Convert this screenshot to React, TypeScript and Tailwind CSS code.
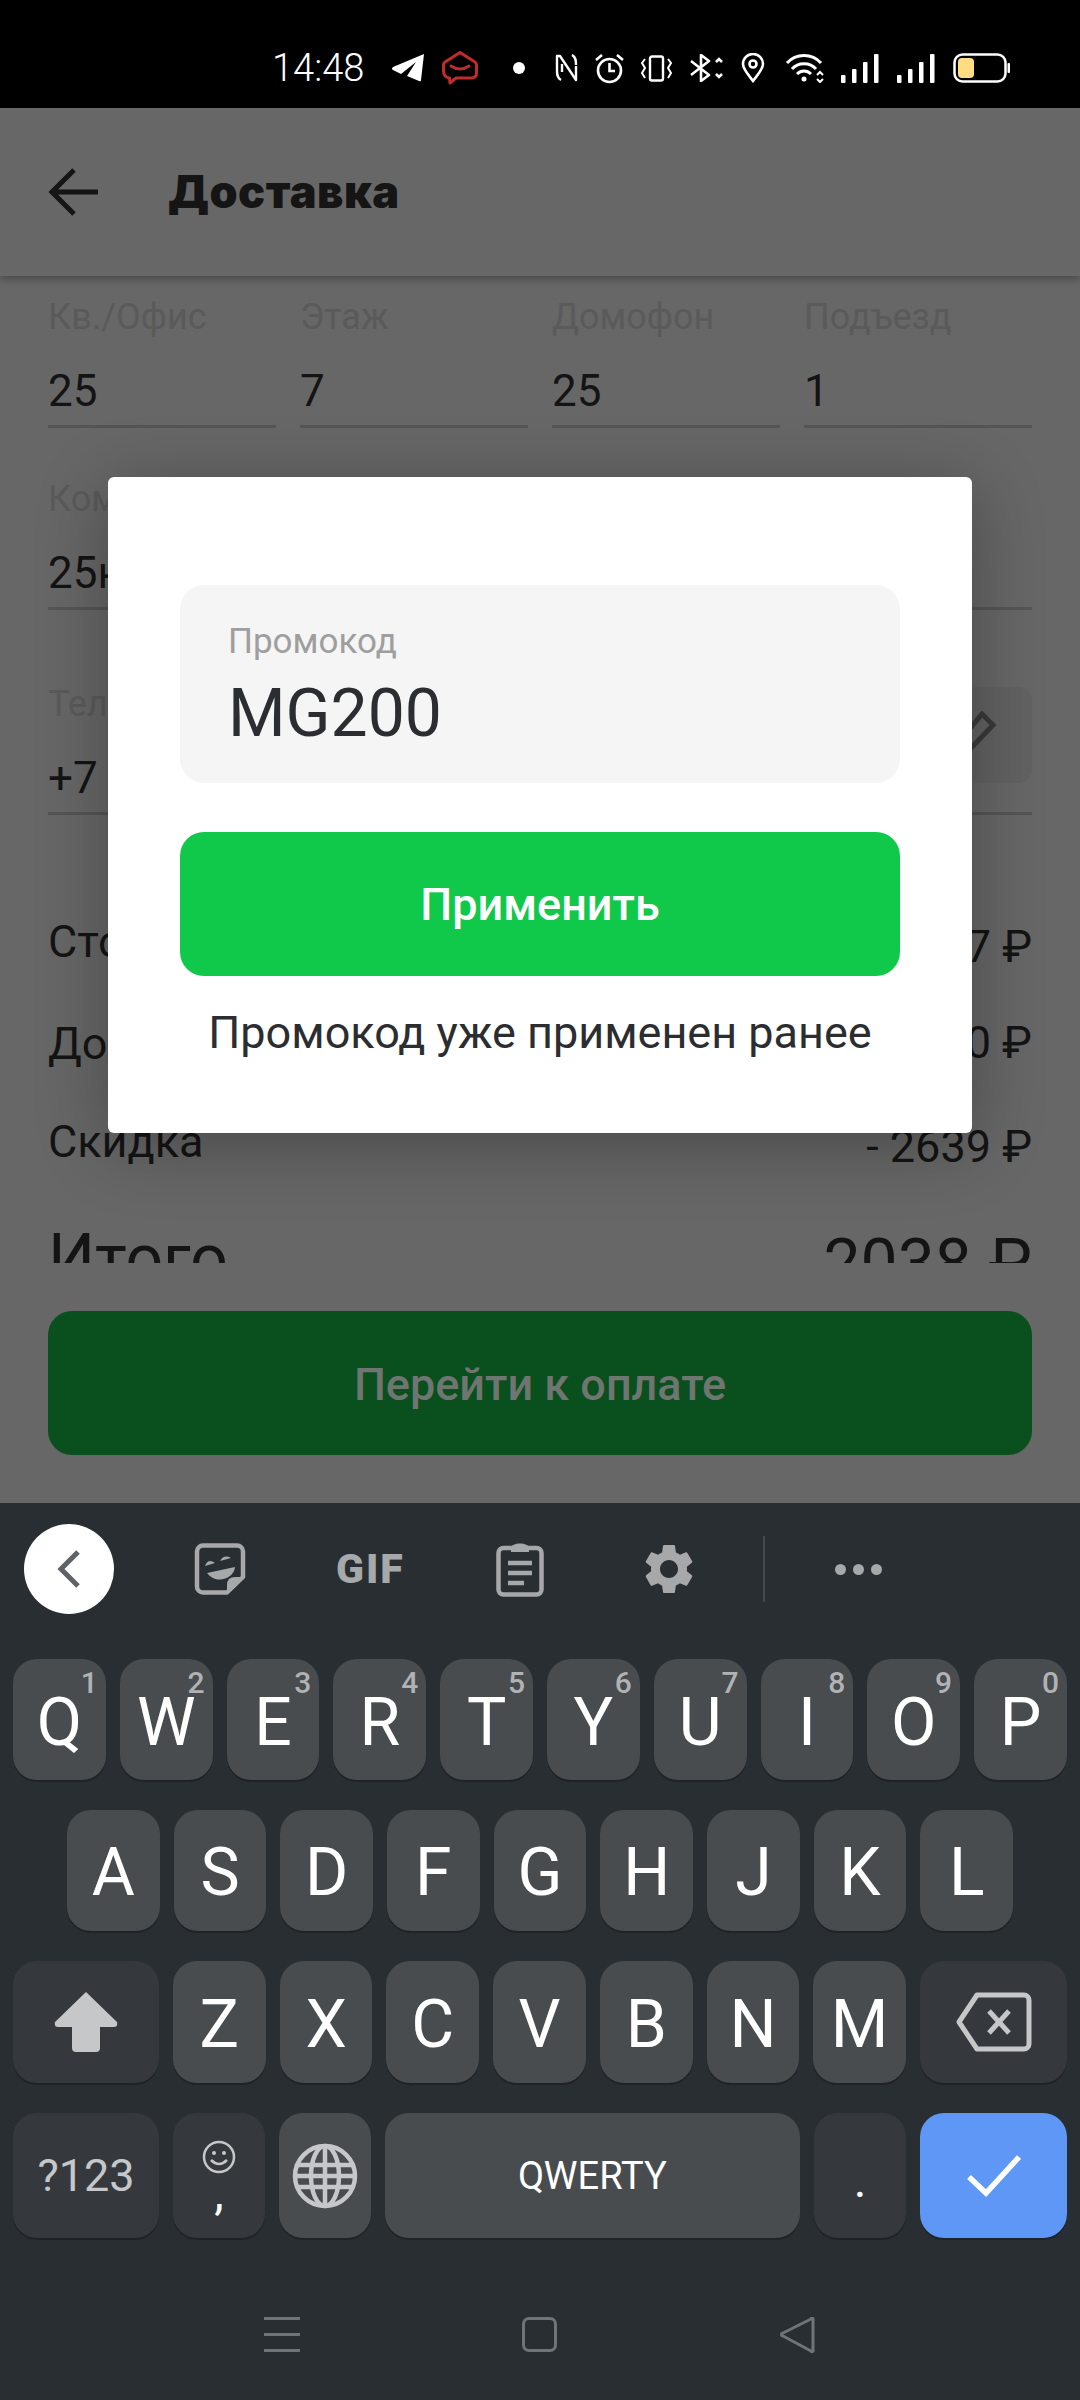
const row1 = [
  ["Q", "1"],
  ["W", "2"],
  ["E", "3"],
  ["R", "4"],
  ["T", "5"],
  ["Y", "6"],
  ["U", "7"],
  ["I", "8"],
  ["O", "9"],
  ["P", "0"],
];
const row2 = ["A", "S", "D", "F", "G", "H", "J", "K", "L"];
const row3 = ["Z", "X", "C", "V", "B", "N", "M"];

function StatusIcons() {
  return (
    <div className="flex items-center h-[108px] pl-[272px] pt-[28px] text-white">
      <span className="w-[91px] text-[38px] leading-[40px] font-['Roboto',sans-serif] font-light">14:48</span>
      <svg className="ml-[29px]" width="32" height="28" viewBox="0 0 32 28" fill="white">
        <path d="M32 0 L1 13 Q-1 15 1 16 L9 20 L24 8 L15 22 L27 27 Q29 28 29 26 Z" />
      </svg>
      <svg className="ml-[18px]" width="36" height="34" viewBox="0 0 36 34" fill="none" stroke="#c02c2c" strokeWidth="3">
        <path d="M18 1.5 L33 11 Q34.5 12 34.5 14 V22 Q34.5 27 29 27 H14 L8 32 L7.5 27 Q1.5 26 1.5 20 V14 Q1.5 12 3 11 Z" strokeLinejoin="round" />
        <path d="M9 15 Q18 21 27 15" strokeLinecap="round" />
      </svg>
      <div className="ml-[35px] w-[12px] h-[12px] rounded-full bg-white" />
      <svg className="ml-[30px]" width="23" height="28" viewBox="0 0 23 28" fill="none" stroke="white" strokeWidth="2.4">
        <path d="M6 26 C2 24 2 20 2 16 V2 H5 L21 26 V12" strokeLinejoin="round" />
        <path d="M17 1 C21 3 21 7 21 11 M7 10 V18" />
      </svg>
      <svg className="ml-[17px]" width="29" height="31" viewBox="0 0 29 31" fill="none" stroke="white" strokeWidth="2.6">
        <circle cx="14.5" cy="17.5" r="11.5" />
        <path d="M14.5 10 V18 H20" />
        <path d="M1 7 L7 2 M28 7 L22 2" />
      </svg>
      <svg className="ml-[16px]" width="33" height="27" viewBox="0 0 33 27" fill="none" stroke="white" strokeWidth="2.4">
        <rect x="10" y="1.5" width="13" height="24" rx="2" />
        <path d="M5 4 L2 8 L5 13 L2 18 L5 23 M28 4 L31 8 L28 13 L31 18 L28 23" strokeWidth="2" />
      </svg>
      <svg className="ml-[17px]" width="34" height="28" viewBox="0 0 34 28" fill="none" stroke="white" strokeWidth="2.6">
        <path d="M1 7 L19 21 L11 27 V1 L19 7 L1 21" strokeLinejoin="round" />
        <path d="M26 8 L29 5 L32 8 M26 20 L29 23 L32 20" />
      </svg>
      <svg className="ml-[17px]" width="24" height="30" viewBox="0 0 24 30" fill="none" stroke="white" strokeWidth="2.6">
        <path d="M12 28 C6 20 2 16 2 11 a10 10 0 0 1 20 0 C22 16 18 20 12 28 Z" />
        <circle cx="12" cy="11" r="3.5" />
      </svg>
      <svg className="ml-[20px]" width="41" height="30" viewBox="0 0 41 30" fill="none" stroke="white" strokeWidth="3">
        <path d="M2 10 C11 0 27 0 36 10" />
        <path d="M7 16 C13 9 25 9 31 16" />
        <path d="M12 21 C16 17 22 17 26 21" />
        <circle cx="19" cy="26" r="2.5" fill="white" stroke="none" />
        <path d="M32 22 L35 19 L38 22 M32 26 L35 29 L38 26" strokeWidth="2" />
      </svg>
      <svg className="ml-[15px]" width="38" height="29" viewBox="0 0 38 29" fill="white">
        <rect x="0" y="21" width="4.5" height="8" rx="1" />
        <rect x="11" y="15" width="4.5" height="14" rx="1" />
        <rect x="22" y="8" width="4.5" height="21" rx="1" />
        <rect x="33" y="0" width="4.5" height="29" rx="1" />
      </svg>
      <svg className="ml-[18px]" width="38" height="29" viewBox="0 0 38 29" fill="white">
        <rect x="0" y="21" width="4.5" height="8" rx="1" />
        <rect x="11" y="15" width="4.5" height="14" rx="1" />
        <rect x="22" y="8" width="4.5" height="21" rx="1" />
        <rect x="33" y="0" width="4.5" height="29" rx="1" />
      </svg>
      <svg className="ml-[18px]" width="57" height="30" viewBox="0 0 57 30" fill="none">
        <rect x="1.5" y="1.5" width="51" height="27" rx="8" stroke="white" strokeWidth="2.5" />
        <rect x="5" y="5" width="16" height="20" rx="4" fill="#ffdd80" />
        <rect x="54.5" y="10" width="2.5" height="10" rx="1" fill="white" />
      </svg>
    </div>
  );
}

function Field({ label, value, className }: { label: string; value: string; className?: string }) {
  return (
    <div className={className}>
      <div className="h-[40px] leading-[40px] text-[36px] text-[#5a5a5a]">{label}</div>
      <div className="mt-[29px] h-[50px] leading-[50px] text-[44px] text-[#141414]">{value}</div>
      <div className="mt-[9px] h-[3px] bg-[#555555]" />
    </div>
  );
}

function SummaryRow({ label, value, offset, className }: { label: string; value: string; offset: string; className: string }) {
  return (
    <div className={`flex justify-between h-[50px] leading-[50px] text-[45px] text-[#141414] ${className}`}>
      <span>{label}</span>
      <span className={offset}>{value}</span>
    </div>
  );
}

function Key({ children, hint, dark, className }: { children?: React.ReactNode; hint?: string; dark?: boolean; className?: string }) {
  return (
    <div
      className={`relative flex items-center justify-center rounded-[24px] shadow-[0_2px_0_#1f2327] text-white font-['Roboto',sans-serif] ${
        dark ? "bg-[#35393d]" : "bg-[#484c4f]"
      } ${className ?? "flex-1"}`}
    >
      {children}
      {hint && (
        <span className="absolute top-[7px] right-[8px] text-[30px] leading-[34px] font-medium text-[#b0b2b4]">{hint}</span>
      )}
    </div>
  );
}

function Toolbar() {
  return (
    <div className="flex items-center h-[156px] pb-[24px] pl-[24px]">
      <div className="flex items-center justify-center w-[90px] h-[90px] rounded-full bg-white">
        <svg width="24" height="38" viewBox="0 0 24 38" fill="none" stroke="#5f6368" strokeWidth="5">
          <path d="M21 2 L4 19 L21 36" />
        </svg>
      </div>
      <svg className="ml-[80px]" width="52" height="52" viewBox="0 0 52 52" fill="none" stroke="#a6a8aa" strokeWidth="4.5">
        <path d="M9 2.5 H43 a6 6 0 0 1 6 6 V34 L33 49.5 H9 a6 6 0 0 1-6-6 V8.5 a6 6 0 0 1 6-6 Z" strokeLinejoin="round" />
        <path d="M33 49.5 L50 34 H41 Q33 34 33 42 Z" fill="#a6a8aa" stroke="none" />
        <path d="M13 30 L41 24 C40 36 22 42 13 30 Z" fill="#a6a8aa" stroke="none" />
        <path d="M11 23 Q14 15 21 20 Z" fill="#a6a8aa" stroke="none" />
        <path d="M26 18 Q30 11 37 15 Z" fill="#a6a8aa" stroke="none" />
      </svg>
      <span className="ml-[90px] w-[71px] text-[41px] leading-[41px] font-black text-[#a6a8aa] font-['Roboto',sans-serif] tracking-[2px]">GIF</span>
      <svg className="ml-[89px]" width="48" height="56" viewBox="0 0 48 56" fill="none" stroke="#a6a8aa" strokeWidth="4.5">
        <rect x="2.5" y="7" width="43" height="46.5" rx="5" />
        <path d="M15 7 C15 1 33 1 33 7 V11 H15 Z" fill="#a6a8aa" stroke="none" />
        <path d="M12 22 H36 M12 32 H36 M12 42 H28" />
      </svg>
      <svg className="ml-[95px]" width="60" height="60" viewBox="0 0 24 24" fill="#a6a8aa">
        <path d="M19.14,12.94c0.04-0.3,0.06-0.61,0.06-0.94c0-0.32-0.02-0.64-0.07-0.94l2.03-1.58c0.18-0.14,0.23-0.41,0.12-0.61 l-1.92-3.32c-0.12-0.22-0.37-0.29-0.59-0.22l-2.39,0.96c-0.5-0.38-1.03-0.7-1.62-0.94L14.4,2.81c-0.04-0.24-0.24-0.41-0.48-0.41 h-3.84c-0.24,0-0.43,0.17-0.47,0.41L9.25,5.35C8.66,5.59,8.12,5.92,7.63,6.29L5.24,5.33c-0.22-0.08-0.47,0-0.59,0.22L2.74,8.87 C2.62,9.08,2.66,9.34,2.86,9.48l2.03,1.58C4.84,11.36,4.8,11.69,4.8,12s0.02,0.64,0.07,0.94l-2.03,1.58 c-0.18,0.14-0.23,0.41-0.12,0.61l1.92,3.32c0.12,0.22,0.37,0.29,0.59,0.22l2.39-0.96c0.5,0.38,1.03,0.7,1.62,0.94l0.36,2.54 c0.05,0.24,0.24,0.41,0.48,0.41h3.84c0.24,0,0.44-0.17,0.47-0.41l0.36-2.54c0.59-0.24,1.13-0.56,1.62-0.94l2.39,0.96 c0.22,0.08,0.47,0,0.59-0.22l1.92-3.32c0.12-0.22,0.07-0.47-0.12-0.61L19.14,12.94z M12,15.6c-1.98,0-3.6-1.62-3.6-3.6 s1.62-3.6,3.6-3.6s3.6,1.62,3.6,3.6S13.98,15.6,12,15.6z" />
      </svg>
      <div className="ml-[64px] w-[2px] h-[66px] bg-[#44484c]" />
      <div className="ml-[70px] flex gap-[7px]">
        <div className="w-[11px] h-[11px] rounded-full bg-[#a6a8aa]" />
        <div className="w-[11px] h-[11px] rounded-full bg-[#a6a8aa]" />
        <div className="w-[11px] h-[11px] rounded-full bg-[#a6a8aa]" />
      </div>
    </div>
  );
}

function Keyboard() {
  return (
    <div className="h-[897px] bg-[#292e32]">
      <Toolbar />
      <div className="flex gap-[14px] h-[121px] px-[13px]">
        {row1.map(([letter, hint]) => (
          <Key key={letter} hint={hint} className="flex-1 pt-[5px] text-[66px]">
            {letter}
          </Key>
        ))}
      </div>
      <div className="flex gap-[14px] h-[121px] mt-[30px] px-[67px]">
        {row2.map((letter) => (
          <Key key={letter} className="flex-1 pt-[4px] text-[66px]">
            {letter}
          </Key>
        ))}
      </div>
      <div className="flex gap-[14px] h-[122px] mt-[30px] px-[13px]">
        <Key dark className="w-[146px]">
          <svg width="64" height="60" viewBox="0 0 64 60" fill="#c5c7c9">
            <path d="M32 0 L63 30 Q64 35 60 35 H46 V56 a4 4 0 0 1-4 4 H22 a4 4 0 0 1-4-4 V35 H4 Q0 35 1 30 Z" />
          </svg>
        </Key>
        {row3.map((letter) => (
          <Key key={letter} className="flex-1 pt-[4px] text-[66px]">
            {letter}
          </Key>
        ))}
        <Key dark className="w-[147px]">
          <svg width="76" height="60" viewBox="0 0 76 60" fill="none" stroke="#c5c7c9" strokeWidth="5">
            <path d="M21 3 H68 a5 5 0 0 1 5 5 V52 a5 5 0 0 1-5 5 H21 L3 30 Z" strokeLinejoin="round" />
            <path d="M33 19 L53 41 M53 19 L33 41" />
          </svg>
        </Key>
      </div>
      <div className="flex gap-[14px] h-[125px] mt-[30px] px-[13px]">
        <Key dark className="w-[146px] text-[45px]">
          <span className="text-[#c5c7c9]">?123</span>
        </Key>
        <Key dark className="w-[92px] flex-col">
          <svg width="34" height="34" viewBox="0 0 34 34" fill="none" stroke="#c5c7c9" strokeWidth="2.5">
            <circle cx="17" cy="17" r="15" />
            <circle cx="12" cy="13" r="2" fill="#c5c7c9" stroke="none" />
            <circle cx="22" cy="13" r="2" fill="#c5c7c9" stroke="none" />
            <path d="M9 20 Q17 28 25 20" />
          </svg>
          <span className="text-[48px] leading-[38px]">,</span>
        </Key>
        <Key className="w-[92px]">
          <svg width="66" height="66" viewBox="0 0 66 66" fill="none" stroke="#c5c7c9" strokeWidth="4.5">
            <circle cx="33" cy="33" r="30" />
            <ellipse cx="33" cy="33" rx="14" ry="30" />
            <path d="M33 3 V63 M5 22 H61 M3 33 H63 M5 44 H61" />
          </svg>
        </Key>
        <Key className="flex-1 pt-[2px] text-[38px]">QWERTY</Key>
        <Key dark className="w-[92px] text-[48px] pt-[10px]">
          .
        </Key>
        <div className="flex items-center justify-center w-[147px] rounded-[24px] bg-[#5e97f6] shadow-[0_2px_0_#1f2327]">
          <svg width="54" height="42" viewBox="0 0 54 42" fill="none" stroke="white" strokeWidth="5.5">
            <path d="M2 22 L19 38 L52 2" />
          </svg>
        </div>
      </div>
      <div className="flex items-center h-[35px] mt-[79px] pl-[264px]">
        <div className="flex flex-col justify-between w-[36px] h-[35px]">
          <div className="h-[3px] bg-[#6f7477]" />
          <div className="h-[3px] bg-[#6f7477]" />
          <div className="h-[3px] bg-[#6f7477]" />
        </div>
        <div className="ml-[222px] w-[35px] h-[35px] rounded-[7px] border-[3px] border-[#6f7477]" />
        <svg className="ml-[223px]" width="35" height="36" viewBox="0 0 35 36" fill="none" stroke="#6f7477" strokeWidth="3">
          <path d="M33 2 V33 a1 1 0 0 1-2 1 L3 19 a1.5 1.5 0 0 1 0-3 L31 2 a1 1 0 0 1 2 0 Z" strokeLinejoin="round" />
        </svg>
      </div>
    </div>
  );
}

export default function App() {
  return (
    <div className="relative flex flex-col w-[1080px] h-[2400px] bg-[#676767] font-['Roboto',sans-serif] overflow-hidden">
      <div className="h-[108px] bg-black">
        <StatusIcons />
      </div>

      <div className="relative z-10 flex items-center h-[168px] pl-[48px] shadow-[0_3px_8px_rgba(0,0,0,0.3)]">
        <svg width="50" height="48" viewBox="0 0 50 48" fill="none" stroke="#151515" strokeWidth="5">
          <path d="M26 2 L4 24 L26 46 M4 24 H50" />
        </svg>
        <h1 className="ml-[70px] text-[45px] leading-[50px] font-black text-[#151515] font-['Inter',sans-serif] tracking-[0.5px]">Доставка</h1>
      </div>

      <div className="h-[987px] px-[48px] pt-[21px] overflow-hidden">
        <div className="grid grid-cols-4 gap-x-[24px]">
          <Field label="Кв./Офис" value="25" />
          <Field label="Этаж" value="7" />
          <Field label="Домофон" value="25" />
          <Field label="Подъезд" value="1" />
        </div>
        <Field label="Комментарий" value="25к" className="mt-[51px]" />
        <div className="relative pt-[74px]">
          <Field label="Телефон" value="+7 900 000-00-00" />
          <div className="absolute right-0 top-[77px] flex items-center justify-center w-[96px] h-[96px] rounded-[14px] bg-[#626262]">
            <svg width="48" height="48" viewBox="0 0 48 48" fill="none" stroke="#3a3a3a" strokeWidth="5">
              <path d="M22 3 L33 14 L12 36 L1 39 L3 26 Z" />
            </svg>
          </div>
        </div>
        <SummaryRow label="Стоимость" value="4677 ₽" offset="mt-[5px]" className="mt-[102px]" />
        <SummaryRow label="Доставка" value="0 ₽" offset="-mt-[1px]" className="mt-[52px]" />
        <SummaryRow label="Скидка" value="- 2639 ₽" offset="mt-[5px]" className="mt-[48px]" />
        <div className="flex justify-between mt-[57px] h-[70px] leading-[70px] text-[66px] text-[#141414]">
          <span>Итого</span>
          <span className="mt-[5px]">2038 ₽</span>
        </div>
      </div>

      <div className="h-[240px] px-[48px] pt-[48px]">
        <div className="flex items-center justify-center h-[144px] pt-[3px] rounded-[24px] bg-[#0a4f1e] text-[45px] font-medium text-[#6f7570]">
          Перейти к оплате
        </div>
      </div>

      <Keyboard />

      <div className="absolute z-20 left-[108px] top-[477px] w-[864px] h-[656px] px-[72px] pt-[108px] rounded-[6px] bg-white shadow-[0_12px_70px_rgba(0,0,0,0.3)]">
        <div className="h-[198px] px-[48px] pt-[37px] rounded-[24px] bg-[#f5f5f5]">
          <div className="h-[40px] leading-[40px] text-[35px] text-[#9e9e9e]">Промокод</div>
          <div className="mt-[14px] h-[76px] leading-[76px] text-[66px] text-[#2c2d30]">MG200</div>
        </div>
        <div className="flex items-center justify-center h-[144px] mt-[49px] pt-[2px] rounded-[24px] bg-[#10c84a] text-[45px] font-medium text-white">
          Применить
        </div>
        <div className="mt-[32px] text-center leading-[50px] text-[45px] text-[#2c2d30]">Промокод уже применен ранее</div>
      </div>
    </div>
  );
}
